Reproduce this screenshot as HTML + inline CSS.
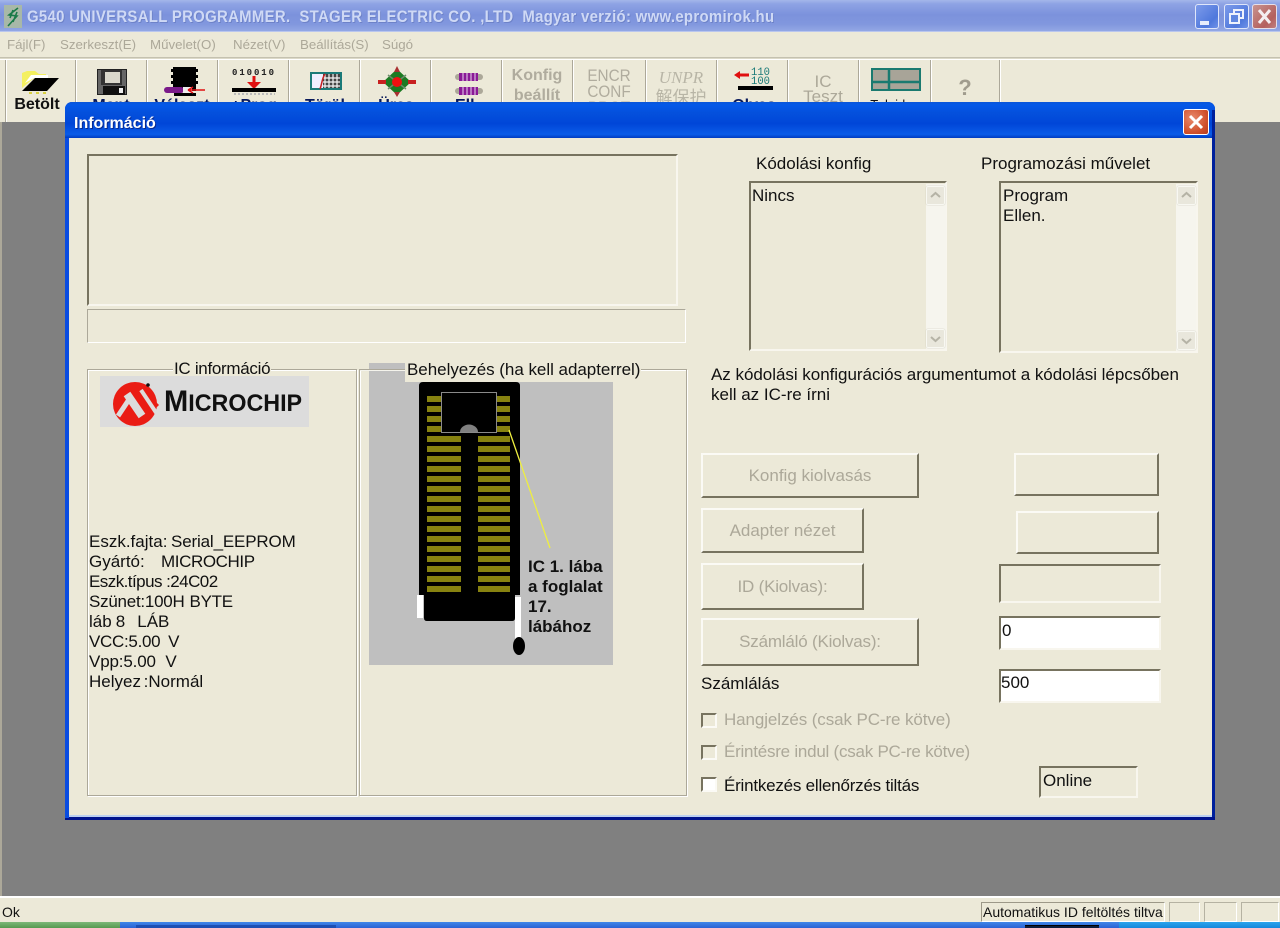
<!DOCTYPE html>
<html><head><meta charset="utf-8"><style>
html,body{margin:0;padding:0;width:1280px;height:928px;overflow:hidden;background:#808080}
body{position:relative;font:17px/20px "Liberation Sans","Noto Sans CJK SC",sans-serif;color:#111;filter:blur(.35px)}
div,svg{position:absolute}
.t{position:absolute;white-space:pre;line-height:20px}
.g{color:#aca899}
.gt{color:#b0ac9e;font-weight:bold;font-size:16px}
.sep{top:60px;width:1px;height:62px;background:#aca899;border-right:1px solid #fff}
.lab{position:absolute;white-space:pre;font-weight:bold;font-size:16px;color:#0a1a5a;text-align:center;width:70px;top:96px;line-height:20px}
.sunk{box-sizing:border-box;border:2px solid;border-color:#77735f #f8f6ee #f8f6ee #77735f;background:#ece9d8}
.btn{box-sizing:border-box;background:#ece9d8;border:2px solid;border-color:#fbfaf5 #77735f #77735f #fbfaf5;color:#aca899;text-align:center}
.grp{box-sizing:border-box;border:1px solid #aca899;box-shadow:1px 1px 0 #fff,inset 1px 1px 0 #fff}
.sb{background:#f6f5ee;width:20px}
.sbb{box-sizing:border-box;width:19px;height:19px;background:#e9e7dc;border:1px solid #f8f8f2;border-radius:2px;box-shadow:0 0 1px #b8b6a8}
.cb{box-sizing:border-box;width:16px;height:15px;border:2px solid;border-color:#77735f #fbfaf5 #fbfaf5 #77735f;left:701px}
.m{font-size:13.3px;color:#aca899;top:35px}
</style></head><body>

<!-- main title bar -->
<div style="left:0;top:0;width:1280px;height:32px;background:linear-gradient(#a4b6ea 0,#8ea3e4 12%,#7c92dc 45%,#8197de 75%,#95a9e6 100%)"></div>
<div style="left:0;top:31px;width:1280px;height:1px;background:#b9c6ee"></div>
<svg style="left:4px;top:5px" width="20" height="24" viewBox="0 0 20 24"><rect x="0" y="0" width="18" height="23" fill="#a8b8a8"/><path d="M14 3 L5 10 L13 11 L4 21 M9 5 L6 13 M13 7 L9 17" fill="none" stroke="#1a7a48" stroke-width="1.600"/></svg>
<div class="t" style="left:27px;top:7px;color:#cfd9f5;font-weight:bold;font-size:17px;letter-spacing:.35px;text-shadow:1px 1px 0 #6d82c8;transform-origin:0 0;transform:scaleX(.878)">G540 UNIVERSALL PROGRAMMER.  STAGER ELECTRIC CO. ,LTD  Magyar verzió: www.epromirok.hu</div>
<div style="left:1195px;top:4px;width:24px;height:25px;box-sizing:border-box;border:1px solid #dfe6fa;border-radius:3px;background:linear-gradient(135deg,#7d9bea,#4f78dc 70%,#6f92e8)"></div>
<div style="left:1200px;top:21px;width:9px;height:4px;background:#e6ecfb"></div>
<div style="left:1224px;top:4px;width:25px;height:25px;box-sizing:border-box;border:1px solid #dfe6fa;border-radius:3px;background:linear-gradient(135deg,#7d9bea,#4f78dc 70%,#6f92e8)"></div>
<svg style="left:1224px;top:4px" width="25" height="25"><rect x="10" y="6" width="9" height="8" fill="none" stroke="#eef2fc" stroke-width="2"/><rect x="6" y="10" width="9" height="9" fill="#5f86e0" stroke="#eef2fc" stroke-width="2"/></svg>
<div style="left:1252px;top:4px;width:25px;height:25px;box-sizing:border-box;border:1px solid #e6dfe8;border-radius:3px;background:linear-gradient(135deg,#c8938f,#b4605e 70%,#c08080)"></div>
<svg style="left:1252px;top:4px" width="25" height="25"><path d="M7 6 L18 19 M18 6 L7 19" stroke="#f4eef0" stroke-width="3"/></svg>

<!-- menu -->
<div style="left:0;top:32px;width:1280px;height:25px;background:#ece9d8"></div>
<div class="t m" style="left:7px">Fájl(F)</div>
<div class="t m" style="left:60px">Szerkeszt(E)</div>
<div class="t m" style="left:150px">Művelet(O)</div>
<div class="t m" style="left:233px">Nézet(V)</div>
<div class="t m" style="left:300px">Beállítás(S)</div>
<div class="t m" style="left:382px">Súgó</div>

<!-- toolbar -->
<div style="left:0;top:57px;width:1280px;height:3px;background:#dcd9c8;border-top:1px solid #c4c1b0;border-bottom:1px solid #fff;box-sizing:border-box"></div>
<div style="left:0;top:60px;width:1280px;height:63px;background:#ece9d8"></div>
<div class="sep" style="left:5px"></div><div class="sep" style="left:75px"></div><div class="sep" style="left:146px"></div><div class="sep" style="left:217px"></div><div class="sep" style="left:288px"></div><div class="sep" style="left:359px"></div><div class="sep" style="left:430px"></div><div class="sep" style="left:501px"></div><div class="sep" style="left:572px"></div><div class="sep" style="left:645px"></div><div class="sep" style="left:716px"></div><div class="sep" style="left:787px"></div><div class="sep" style="left:858px"></div><div class="sep" style="left:930px"></div><div class="sep" style="left:999px"></div>

<!-- open folder -->
<svg style="left:20px;top:68px" width="42" height="28"><path d="M2 18 V5 L7 3 H15 L19 6 H26 V10 H14 L2 20Z" fill="#f4f060"/><path d="M5 15 L11 7 H28 V10 H14Z" fill="#fff"/><path d="M2 23 L15 10 H39 L27 23Z" fill="#000"/><path d="M9 25 h3 M16 25 h3 M23 25 h3" stroke="#d8d040" stroke-width="2"/></svg>
<div class="lab" style="left:2px;color:#111;top:95px">Betölt</div>
<!-- floppy -->
<svg style="left:97px;top:69px" width="31" height="27"><rect x=".5" y=".5" width="29" height="25" fill="#666" stroke="#222"/><rect x="4" y="1" width="21" height="15" fill="#333"/><rect x="8" y="3" width="15" height="11" fill="#dad8cc"/><rect x="6" y="17" width="22" height="9" fill="#111"/><rect x="22" y="19" width="4" height="5" fill="#eee"/></svg>
<div class="lab" style="left:76px">Ment</div>
<!-- chip -->
<svg style="left:160px;top:66px" width="50" height="32"><rect x="13" y="1" width="23" height="24" fill="#000"/><rect x="11" y="3" width="27" height="3" fill="#000"/><rect x="11" y="9" width="27" height="3" fill="#000"/><rect x="11" y="15" width="27" height="3" fill="#000"/><rect x="4" y="21" width="20" height="6" rx="3" fill="#7a1a8a"/><rect x="23" y="21" width="9" height="6" fill="#eee"/><rect x="14" y="27" width="22" height="3" fill="#000"/><path d="M28 24 H45 M28 24 L33 21 M28 24 L33 27" stroke="#e01010" stroke-width="1.500" fill="none"/></svg>
<div class="lab" style="left:147px">Választ</div>
<!-- prog -->
<svg style="left:231px;top:66px" width="46" height="32"><text x="1" y="9" font-family="Liberation Mono" font-size="9" font-weight="bold" fill="#222" textLength="42">010010</text><path d="M23 10 V18" stroke="#e01010" stroke-width="3"/><path d="M16 16 H30 L23 23Z" fill="#e01010"/><rect x="1" y="22" width="44" height="4" fill="#000"/><path d="M3 28 H44" stroke="#bbb" stroke-width="2" stroke-dasharray="2 2"/></svg>
<div class="lab" style="left:219px">+Prog</div>
<!-- erase -->
<svg style="left:310px;top:72px" width="34" height="20"><rect x="1" y="1" width="30" height="16" fill="#eef" stroke="#1a7a78" stroke-width="2"/><rect x="13" y="2" width="17" height="14" fill="#444"/><path d="M15 2 V16 M19 2 V16 M23 2 V16 M27 2 V16 M13 6 H30 M13 10 H30 M13 14 H30" stroke="#f4f4f4" stroke-width="1.200"/><path d="M10 17 C12 12 12 6 15 2" stroke="#c82020" fill="none" stroke-width="1.500"/></svg>
<div class="lab" style="left:290px">Töröl</div>
<!-- blank check -->
<svg style="left:378px;top:65px" width="38" height="34"><path d="M19 4 L33 17 L19 30 L5 17Z" fill="#1c7a22"/><path d="M19 1 l3 6 h-6Z" fill="#a83030"/><path d="M19 32 l-3 -5 h6Z" fill="#a83030"/><rect x="0" y="15" width="8" height="4" fill="#c82020"/><rect x="30" y="15" width="8" height="4" fill="#c82020"/><path d="M10 10 L28 24 M28 10 L10 24" stroke="#6a8a6a" stroke-width="1.500"/><circle cx="19" cy="17" r="5" fill="#f01010"/></svg>
<div class="lab" style="left:361px">Üres</div>
<!-- verify -->
<svg style="left:455px;top:70px" width="30" height="28"><rect x="0" y="4" width="28" height="6" rx="3" fill="#aca899"/><rect x="4" y="3" width="19" height="8" fill="#8a1a96"/><path d="M8 3 V11 M12 3 V11 M16 3 V11 M20 3 V11" stroke="#e8d8ee" stroke-width="1"/><rect x="0" y="18" width="28" height="6" rx="3" fill="#aca899"/><rect x="4" y="17" width="19" height="8" fill="#8a1a96"/><path d="M8 17 V25 M12 17 V25 M16 17 V25 M20 17 V25" stroke="#e8d8ee" stroke-width="1"/></svg>
<div class="lab" style="left:432px">Ell.</div>
<!-- konfig -->
<div class="t gt" style="left:502px;width:70px;text-align:center;top:66px">Konfig</div>
<div class="t gt" style="left:502px;width:70px;text-align:center;top:86px">beállít</div>
<div class="t gt" style="left:574px;width:70px;text-align:center;top:66px;font-weight:normal;font-size:17px;transform:scaleX(.9)">ENCR</div>
<div class="t gt" style="left:574px;width:70px;text-align:center;top:82px;font-weight:normal;font-size:17px;transform:scaleX(.9)">CONF</div>
<div class="t gt" style="left:574px;width:70px;text-align:center;top:98px;font-weight:normal;font-size:17px;transform:scaleX(.9)">PROT</div>
<div class="t" style="left:646px;width:70px;text-align:center;top:68px;font:italic 17px/20px 'Liberation Serif',serif;color:#b8b5a6">UNPR</div>
<div class="t" style="left:646px;width:70px;text-align:center;top:88px;font-size:17px;color:#b8b5a6">解保护</div>
<!-- read -->
<svg style="left:732px;top:66px" width="42" height="32"><text x="19" y="9" font-family="Liberation Mono" font-size="11" fill="#1a7a78" textLength="19" lengthAdjust="spacingAndGlyphs">110</text><text x="19" y="18" font-family="Liberation Mono" font-size="11" fill="#1a7a78" textLength="19" lengthAdjust="spacingAndGlyphs">100</text><path d="M6 9 H17" stroke="#e01010" stroke-width="3"/><path d="M2 9 L8 5 V13Z" fill="#e01010"/><rect x="6" y="20" width="35" height="4" fill="#000"/></svg>
<div class="lab" style="left:719px">Olvas</div>
<div class="t" style="left:788px;width:70px;text-align:center;top:72px;color:#aca899">IC</div>
<div class="t" style="left:788px;width:70px;text-align:center;top:87px;color:#aca899">Teszt</div>
<!-- grid -->
<svg style="left:871px;top:68px" width="50" height="23"><rect x="1" y="1" width="48" height="21" fill="#a8a498" stroke="#1a7a70" stroke-width="2"/><path d="M18 1 V22 M1 14 H49" stroke="#1a7a70" stroke-width="2.500"/></svg>
<div class="lab" style="left:860px;font-weight:normal;color:#111;font-size:13px;top:95px">Tulajdon</div>
<div class="t" style="left:932px;width:66px;text-align:center;top:78px;color:#a09c8e;font-weight:bold;font-size:22px">?</div>

<!-- MDI -->
<div style="left:0;top:122px;width:1280px;height:775px;background:#808080"></div>
<div style="left:0;top:122px;width:2px;height:775px;background:#aca899"></div>

<!-- status bar -->
<div style="left:0;top:896px;width:1280px;height:2px;background:#fff"></div>
<div style="left:0;top:898px;width:1280px;height:24px;background:#ece9d8"></div>
<div class="t" style="left:2px;top:902px;font-size:14px">Ok</div>
<div style="left:981px;top:902px;width:184px;height:20px;box-sizing:border-box;border:1px solid;border-color:#9c9888 #fff #fff #9c9888"></div>
<div class="t" style="left:983px;top:902px;font-size:14px">Automatikus ID feltöltés tiltva</div>
<div style="left:1169px;top:902px;width:31px;height:20px;box-sizing:border-box;border:1px solid;border-color:#b5b2a2 #fff #fff #b5b2a2"></div>
<div style="left:1204px;top:902px;width:33px;height:20px;box-sizing:border-box;border:1px solid;border-color:#b5b2a2 #fff #fff #b5b2a2"></div>
<div style="left:1241px;top:902px;width:38px;height:20px;box-sizing:border-box;border:1px solid;border-color:#b5b2a2 #fff #fff #b5b2a2"></div>

<!-- taskbar -->
<div style="left:0;top:922px;width:1280px;height:6px;background:linear-gradient(#3f86e8,#2a62d4)"></div>
<div style="left:0;top:922px;width:120px;height:6px;background:linear-gradient(#7cb878,#569a50)"></div>
<div style="left:136px;top:925px;width:200px;height:3px;background:#1d4fb4"></div>
<div style="left:1025px;top:925px;width:74px;height:3px;background:#0c1c3c;border-top:1px solid #000"></div>
<div style="left:1119px;top:922px;width:161px;height:6px;background:linear-gradient(#2aa4ec,#1488dc)"></div>

<!-- dialog -->
<div style="left:65px;top:102px;width:1150px;height:718px;background:#0831d9;border-radius:7px 7px 0 0"></div>
<div style="left:65px;top:102px;width:1150px;height:36px;border-radius:7px 7px 0 0;background:linear-gradient(#0a56d8 0,#0458e8 8%,#0450dc 30%,#0046d8 60%,#0a5ce8 90%,#003cc0 100%)"></div>
<div style="left:1212px;top:110px;width:3px;height:710px;background:#00209c"></div>
<div style="left:65px;top:817px;width:1150px;height:3px;background:#00138c"></div>
<div style="left:65px;top:138px;width:4px;height:680px;background:#0a4ce0"></div>
<div class="t" style="left:74px;top:114px;color:#fff;font-weight:bold;font-size:16px;text-shadow:1px 1px 0 #0a2a90">Információ</div>
<div style="left:1183px;top:109px;width:26px;height:26px;box-sizing:border-box;border:1px solid #fff;border-radius:3px;background:radial-gradient(circle at 35% 35%,#e88a6c,#d0502c 65%,#b83c1c)"></div>
<svg style="left:1183px;top:109px" width="26" height="26"><path d="M7 7 L19 19 M19 7 L7 19" stroke="#fff" stroke-width="3"/></svg>

<!-- client -->
<div style="left:69px;top:138px;width:1143px;height:677px;background:#ece9d8"></div>
<div style="left:69px;top:815px;width:1143px;height:2px;background:#bcd0f0"></div>

<div class="sunk" style="left:87px;top:154px;width:591px;height:152px"></div>
<div style="left:87px;top:309px;width:599px;height:34px;box-sizing:border-box;border:1px solid;border-color:#aca899 #fff #fff #aca899;background:#ece9d8"></div>

<div class="t" style="left:756px;top:154px">Kódolási konfig</div>
<div class="t" style="left:981px;top:154px">Programozási művelet</div>

<div class="sunk" style="left:749px;top:181px;width:198px;height:170px"></div>
<div class="sb" style="left:926px;top:184px;height:165px"></div>
<div class="sbb" style="left:926px;top:186px"></div>
<svg style="left:926px;top:186px" width="19" height="19"><path d="M5 11 L9.500 7 L14 11" fill="none" stroke="#b5b3a6" stroke-width="2"/></svg>
<div class="sbb" style="left:926px;top:329px"></div>
<svg style="left:926px;top:329px" width="19" height="19"><path d="M5 8 L9.500 12 L14 8" fill="none" stroke="#b5b3a6" stroke-width="2"/></svg>
<div class="t" style="left:752px;top:186px">Nincs</div>

<div class="sunk" style="left:999px;top:181px;width:199px;height:172px"></div>
<div class="sb" style="left:1176px;top:184px;height:167px"></div>
<div class="sbb" style="left:1177px;top:186px"></div>
<svg style="left:1177px;top:186px" width="19" height="19"><path d="M5 11 L9.500 7 L14 11" fill="none" stroke="#b5b3a6" stroke-width="2"/></svg>
<div class="sbb" style="left:1177px;top:331px"></div>
<svg style="left:1177px;top:331px" width="19" height="19"><path d="M5 8 L9.500 12 L14 8" fill="none" stroke="#b5b3a6" stroke-width="2"/></svg>
<div class="t" style="left:1003px;top:186px">Program</div>
<div class="t" style="left:1003px;top:206px">Ellen.</div>

<div class="t" style="left:711px;top:365px;letter-spacing:-.03px">Az kódolási konfigurációs argumentumot a kódolási lépcsőben</div>
<div class="t" style="left:711px;top:385px">kell az IC-re írni</div>

<!-- group boxes -->
<div class="grp" style="left:87px;top:369px;width:270px;height:427px"></div>
<div class="grp" style="left:359px;top:369px;width:328px;height:427px"></div>

<!-- gray socket area -->
<div style="left:369px;top:363px;width:244px;height:302px;background:#bfbfbf"></div>
<div style="left:360px;top:369px;width:46px;height:1px;background:#aca899"></div>
<div style="left:360px;top:370px;width:46px;height:1px;background:#f4f3ec"></div>
<div style="left:405px;top:358px;width:236px;height:24px;background:#ece9d8"></div>
<div class="t" style="left:173px;top:360px;line-height:18px;background:#ece9d8;padding:0 1px;letter-spacing:-.3px">IC információ</div>
<div class="t" style="left:407px;top:360px;letter-spacing:-.03px">Behelyezés (ha kell adapterrel)</div>

<!-- logo -->
<div style="left:100px;top:376px;width:209px;height:51px;background:#dcdcdc"></div>
<svg style="left:110px;top:380px" width="52" height="48"><circle cx="25" cy="24" r="22" fill="#ea1c14"/><path d="M40 16 L49 25 L44 30Z" fill="#ea1c14"/><path d="M8 36 L20 18" stroke="#dcdcdc" stroke-width="5"/><path d="M17 14 L32 36" stroke="#dcdcdc" stroke-width="8"/><path d="M31 10 L47 34" stroke="#dcdcdc" stroke-width="4"/><circle cx="38" cy="5" r="1.800" fill="#111"/></svg>
<div class="t" style="left:164px;top:387px;font-weight:bold;font-size:30px;line-height:30px;color:#111;transform-origin:0 0;transform:scaleX(.97)">M<span style="font-size:24px">ICROCHIP</span></div>

<!-- socket -->
<svg style="left:369px;top:363px" width="244" height="302">
<path d="M50 23 Q50 19 54 19 H147 Q151 19 151 23 V232 H146 V255 Q146 258 143 258 H58 Q55 258 55 255 V232 H50Z" fill="#000"/>
<g fill="#878210">
<rect x="58" y="33" width="14" height="6"/><rect x="128" y="33" width="13" height="6"/>
<rect x="58" y="43" width="14" height="6"/><rect x="128" y="43" width="13" height="6"/>
<rect x="58" y="53" width="14" height="6"/><rect x="128" y="53" width="13" height="6"/>
<rect x="58" y="63" width="14" height="6"/><rect x="128" y="63" width="13" height="6"/>
<rect x="58" y="73" width="34" height="6"/><rect x="109" y="73" width="32" height="6"/>
<rect x="58" y="83" width="34" height="6"/><rect x="109" y="83" width="32" height="6"/>
<rect x="58" y="93" width="34" height="6"/><rect x="109" y="93" width="32" height="6"/>
<rect x="58" y="103" width="34" height="6"/><rect x="109" y="103" width="32" height="6"/>
<rect x="58" y="113" width="34" height="6"/><rect x="109" y="113" width="32" height="6"/>
<rect x="58" y="123" width="34" height="6"/><rect x="109" y="123" width="32" height="6"/>
<rect x="58" y="133" width="34" height="6"/><rect x="109" y="133" width="32" height="6"/>
<rect x="58" y="143" width="34" height="6"/><rect x="109" y="143" width="32" height="6"/>
<rect x="58" y="153" width="34" height="6"/><rect x="109" y="153" width="32" height="6"/>
<rect x="58" y="163" width="34" height="6"/><rect x="109" y="163" width="32" height="6"/>
<rect x="58" y="173" width="34" height="6"/><rect x="109" y="173" width="32" height="6"/>
<rect x="58" y="183" width="34" height="6"/><rect x="109" y="183" width="32" height="6"/>
<rect x="58" y="193" width="34" height="6"/><rect x="109" y="193" width="32" height="6"/>
<rect x="58" y="203" width="34" height="6"/><rect x="109" y="203" width="32" height="6"/>
<rect x="58" y="213" width="34" height="6"/><rect x="109" y="213" width="32" height="6"/>
<rect x="58" y="223" width="34" height="6"/><rect x="109" y="223" width="32" height="6"/>
</g>
<rect x="72.500" y="29.500" width="55" height="40" fill="#000" stroke="#8a8a8a" stroke-width="1"/>
<path d="M91 69 A9 7.500 0 0 1 109 69Z" fill="#808080"/>
<rect x="48" y="232" width="6" height="23" fill="#fff"/>
<rect x="146" y="234" width="6" height="44" fill="#fff"/>
<ellipse cx="150" cy="283" rx="6" ry="9" fill="#000"/>
<path d="M140 67 L181 185" stroke="#eeee40" stroke-width="1.300"/>
</svg>
<div class="t" style="left:528px;top:557px;font-weight:bold;color:#111">IC 1. lába</div>
<div class="t" style="left:528px;top:577px;font-weight:bold;color:#111">a foglalat</div>
<div class="t" style="left:528px;top:597px;font-weight:bold;color:#111">17.</div>
<div class="t" style="left:528px;top:617px;font-weight:bold;color:#111">lábához</div>

<!-- info -->
<div class="t" style="left:89px;top:532px">Eszk.fajta:</div>
<div class="t" style="left:171px;top:532px;letter-spacing:-.15px">Serial_EEPROM</div>
<div class="t" style="left:89px;top:552px">Gyártó:</div>
<div class="t" style="left:161px;top:552px;letter-spacing:-.4px">MICROCHIP</div>
<div class="t" style="left:89px;top:572px;letter-spacing:-.55px">Eszk.típus :24C02</div>
<div class="t" style="left:89px;top:592px;word-spacing:-2px;letter-spacing:-.25px">Szünet:100H  BYTE</div>
<div class="t" style="left:89px;top:612px;word-spacing:-.7px">láb 8   LÁB</div>
<div class="t" style="left:89px;top:632px;word-spacing:-1.800px;letter-spacing:-.3px">VCC:5.00   V</div>
<div class="t" style="left:89px;top:652px;word-spacing:-1.400px;letter-spacing:-.15px">Vpp:5.00   V</div>
<div class="t" style="left:89px;top:672px;word-spacing:-2px">Helyez :Normál</div>

<!-- buttons -->
<div class="btn" style="left:701px;top:453px;width:218px;height:45px;line-height:41px">Konfig kiolvasás</div>
<div class="btn" style="left:1014px;top:453px;width:145px;height:43px"></div>
<div class="btn" style="left:701px;top:508px;width:163px;height:45px;line-height:41px">Adapter nézet</div>
<div class="btn" style="left:1016px;top:511px;width:143px;height:43px"></div>
<div class="btn" style="left:701px;top:563px;width:163px;height:47px;line-height:43px;letter-spacing:-.2px">ID (Kiolvas):</div>
<div class="sunk" style="left:999px;top:564px;width:162px;height:39px"></div>
<div class="btn" style="left:701px;top:618px;width:218px;height:48px;line-height:44px;letter-spacing:-.2px">Számláló (Kiolvas):</div>
<div class="sunk" style="left:999px;top:616px;width:162px;height:34px;background:#fff"></div>
<div class="t" style="left:1002px;top:621px">0</div>
<div class="sunk" style="left:999px;top:669px;width:162px;height:34px;background:#fff"></div>
<div class="t" style="left:1001px;top:673px">500</div>
<div class="t" style="left:701px;top:674px">Számlálás</div>

<div class="cb" style="top:713px"></div>
<div class="t g" style="left:724px;top:710px;letter-spacing:-.1px">Hangjelzés (csak PC-re kötve)</div>
<div class="cb" style="top:745px"></div>
<div class="t g" style="left:724px;top:742px;letter-spacing:-.24px">Érintésre indul (csak PC-re kötve)</div>
<div class="cb" style="top:777px;background:#fff"></div>
<div class="t" style="left:724px;top:776px;letter-spacing:-.22px">Érintkezés ellenőrzés tiltás</div>
<div class="sunk" style="left:1039px;top:766px;width:99px;height:32px"></div>
<div class="t" style="left:1043px;top:771px">Online</div>

</body></html>
